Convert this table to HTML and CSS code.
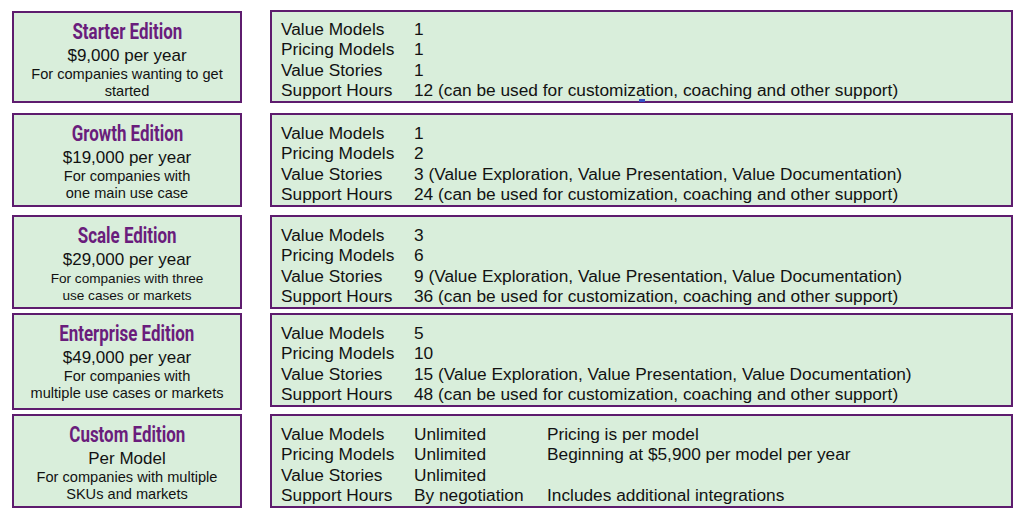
FILE: index.html
```html
<!DOCTYPE html>
<html lang="en">
<head>
<meta charset="utf-8">
<title>Editions</title>
<link rel="stylesheet" href="styles.css">
</head>
<body>
<main class="plans">
  <section class="row row-1">
    <div class="edition">
      <h2 class="title"><span class="title-text">Starter Edition</span></h2>
      <div class="price">$9,000 per year</div>
      <p class="desc">For companies wanting to get<br>started</p>
    </div>
    <div class="details">
      <div class="line"><span class="k">Value Models</span><span class="v">1</span></div>
      <div class="line"><span class="k">Pricing Models</span><span class="v">1</span></div>
      <div class="line"><span class="k">Value Stories</span><span class="v">1</span></div>
      <div class="line"><span class="k">Support Hours</span><span class="v">12 (can be used for customization, coaching and other support)</span></div>
      <span class="cursor-mark"></span>
    </div>
  </section>
  <section class="row row-2">
    <div class="edition">
      <h2 class="title"><span class="title-text">Growth Edition</span></h2>
      <div class="price">$19,000 per year</div>
      <p class="desc">For companies with<br>one main use case</p>
    </div>
    <div class="details">
      <div class="line"><span class="k">Value Models</span><span class="v">1</span></div>
      <div class="line"><span class="k">Pricing Models</span><span class="v">2</span></div>
      <div class="line"><span class="k">Value Stories</span><span class="v">3 (Value Exploration, Value Presentation, Value Documentation)</span></div>
      <div class="line"><span class="k">Support Hours</span><span class="v">24 (can be used for customization, coaching and other support)</span></div>
    </div>
  </section>
  <section class="row row-3">
    <div class="edition">
      <h2 class="title"><span class="title-text">Scale Edition</span></h2>
      <div class="price">$29,000 per year</div>
      <p class="desc small">For companies with three<br>use cases or markets</p>
    </div>
    <div class="details">
      <div class="line"><span class="k">Value Models</span><span class="v">3</span></div>
      <div class="line"><span class="k">Pricing Models</span><span class="v">6</span></div>
      <div class="line"><span class="k">Value Stories</span><span class="v">9 (Value Exploration, Value Presentation, Value Documentation)</span></div>
      <div class="line"><span class="k">Support Hours</span><span class="v">36 (can be used for customization, coaching and other support)</span></div>
    </div>
  </section>
  <section class="row row-4">
    <div class="edition">
      <h2 class="title"><span class="title-text">Enterprise Edition</span></h2>
      <div class="price">$49,000 per year</div>
      <p class="desc">For companies with<br>multiple use cases or markets</p>
    </div>
    <div class="details">
      <div class="line"><span class="k">Value Models</span><span class="v">5</span></div>
      <div class="line"><span class="k">Pricing Models</span><span class="v">10</span></div>
      <div class="line"><span class="k">Value Stories</span><span class="v">15 (Value Exploration, Value Presentation, Value Documentation)</span></div>
      <div class="line"><span class="k">Support Hours</span><span class="v">48 (can be used for customization, coaching and other support)</span></div>
    </div>
  </section>
  <section class="row row-5">
    <div class="edition">
      <h2 class="title"><span class="title-text">Custom Edition</span></h2>
      <div class="price">Per Model</div>
      <p class="desc">For companies with multiple<br>SKUs and markets</p>
    </div>
    <div class="details">
      <div class="line"><span class="k">Value Models</span><span class="v">Unlimited</span><span class="n">Pricing is per model</span></div>
      <div class="line"><span class="k">Pricing Models</span><span class="v">Unlimited</span><span class="n">Beginning at $5,900 per model per year</span></div>
      <div class="line"><span class="k">Value Stories</span><span class="v">Unlimited</span></div>
      <div class="line"><span class="k">Support Hours</span><span class="v">By negotiation</span><span class="n">Includes additional integrations</span></div>
    </div>
  </section>
</main>
</body>
</html>
```

FILE: styles.css
```css
html, body {
  margin: 0;
  padding: 0;
  background: #ffffff;
}

body {
  font-family: "Liberation Sans", Arial, sans-serif;
  color: #121212;
  width: 1024px;
  height: 516px;
  overflow: hidden;
}

.plans {
  display: flex;
  flex-direction: column;
  padding: 11px 0 0 12px;
}

.row {
  display: grid;
  grid-template-columns: 230px 743px;
  column-gap: 28px;
}

.row-1 { height: 91px; }
.row-2 { height: 92px; margin-top: 11px; }
.row-3 { height: 91px; margin-top: 10px; }
.row-4 { height: 94px; margin-top: 7px; }
.row-5 { height: 94px; margin-top: 7px; }

.edition,
.details {
  box-sizing: border-box;
  background: #d9eedb;
  border: 2px solid #5e1c6e;
  overflow: visible;
}

.edition {
  text-align: center;
  padding-top: 6px;
}

.details {
  position: relative;
  padding: 8px 0 0 9px;
}

.row-1 .details {
  margin-top: -1px;
  padding-top: 7px;
}

.row-4 .details {
  margin-bottom: 3px;
}

.cursor-mark {
  position: absolute;
  left: 367px;
  bottom: -1px;
  width: 6px;
  height: 3px;
  background: #3552c8;
}

.title {
  margin: 0;
  height: 26px;
  font-family: Roboto, "Liberation Sans", sans-serif;
  font-weight: 700;
  font-size: 22px;
  line-height: 26px;
  color: #6a1d7c;
  white-space: nowrap;
}

.title-text {
  display: inline-block;
  transform: scaleX(0.77);
  transform-origin: center;
}

.price {
  margin-top: 1px;
  font-size: 17px;
  line-height: 20px;
}

.desc {
  margin: 0;
  font-size: 14.6px;
  line-height: 17px;
}

.desc.small {
  font-size: 13.6px;
}

.line {
  display: flex;
  font-size: 17.3px;
  line-height: 20.4px;
  white-space: nowrap;
}

.k,
.v {
  flex: 0 0 133px;
}

.line .v:last-child {
  flex: 0 0 auto;
}
```
